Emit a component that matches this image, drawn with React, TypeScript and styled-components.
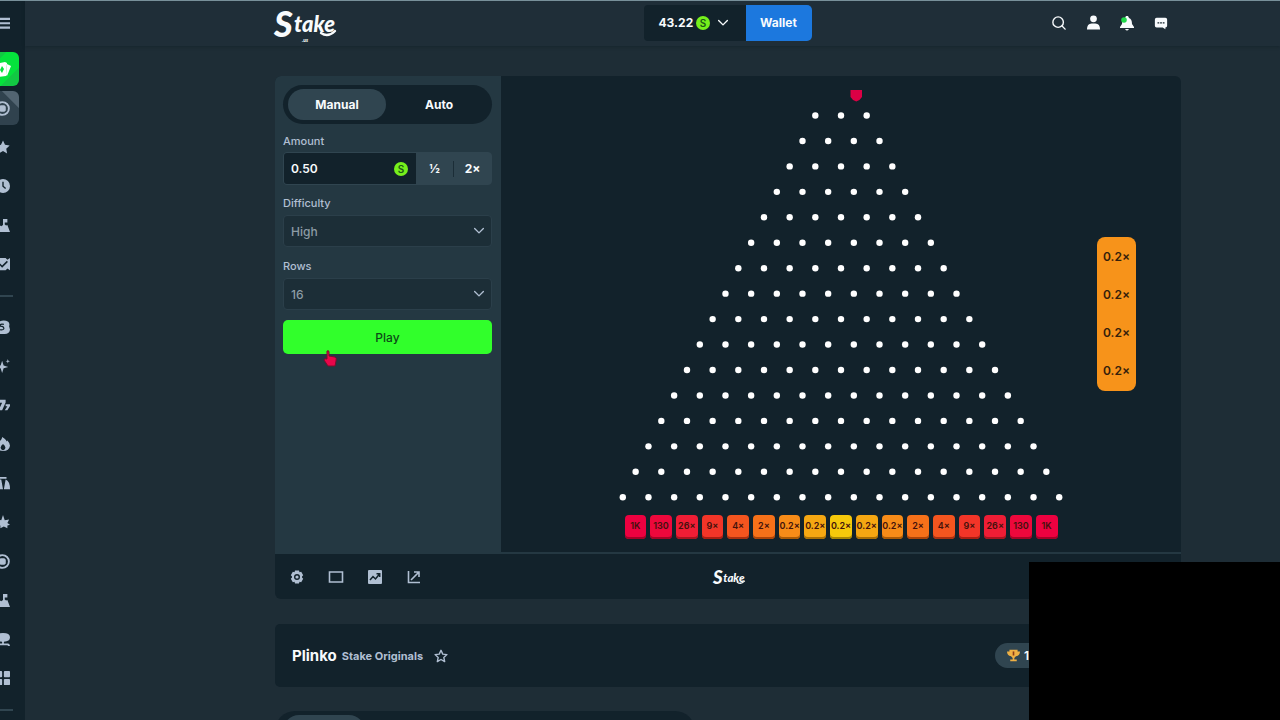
import React from "react";
import styled, { createGlobalStyle, css } from "styled-components";

const c = {
  page: "#1e2d36",
  dark: "#12222b",
  panel: "#243842",
  raised: "#304550",
  field: "#1c2e37",
  line: "#2b3f4a",
  muted: "#b0bfd2",
  white: "#f8fbfd",
};

const GlobalStyle = createGlobalStyle`
  *, *::before, *::after { box-sizing: border-box; }
  body { margin: 0; background: ${c.page}; color: ${c.white}; font-family: Inter, "Open Sans", sans-serif; font-size: 12px; }
  button, input, select { font: inherit; color: inherit; margin: 0; }
  button { border: 0; background: none; padding: 0; cursor: pointer; }
`;

const Shell = styled.div`
  display: grid;
  grid-template-columns: 25px minmax(0, 1fr);
  height: 100vh;
  overflow: hidden;
  border-top: 1px solid #78909a;
`;

const SideNav = styled.nav`
  background: ${c.dark};
  overflow: hidden;
  color: ${c.muted};
`;

const NavList = styled.div`
  display: flex;
  flex-direction: column;
  gap: 5px;
  width: 33px;
  margin-left: -14px;
`;

const NavButton = styled.button<{ $tone?: "green" | "grey" }>`
  display: flex;
  align-items: center;
  justify-content: center;
  flex: none;
  width: 33px;
  height: 34px;
  border-radius: 6px;
  overflow: hidden;
  ${(p) => p.$tone === "green" && css`background: linear-gradient(135deg, #12c843 30%, #05e23c 31%, #05e23c 72%, #12c843 73%); color: #fff;`}
  ${(p) => p.$tone === "grey" && css`background: linear-gradient(45deg, #30424e 74%, #526471 75%);`}
`;

const MenuButton = styled(NavButton)`
  height: 44px;
  margin-bottom: 2px;
`;

const NavRule = styled.hr`
  width: 27px;
  height: 2px;
  margin: 9px 0 8px;
  border: 0;
  flex: none;
  background: ${c.raised};
`;

const Column = styled.div`
  min-width: 0;
`;

const Header = styled.header`
  display: grid;
  grid-template-columns: 1fr auto 1fr;
  align-items: center;
  height: 45px;
  padding: 0 99px 2px 249px;
  background: #1f2e38;
  box-shadow: 0 1px 3px rgba(10, 24, 32, 0.35);
`;

const Brand = styled.a`
  justify-self: start;
  display: block;
  color: ${c.white};
  text-decoration: none;
`;

const Balance = styled.div`
  display: flex;
  height: 36px;
`;

const BalanceButton = styled.button`
  display: flex;
  align-items: center;
  gap: 3px;
  width: 102px;
  padding: 0 18px 0 15px;
  border-radius: 4px 0 0 4px;
  background: ${c.dark};
  font-weight: 700;
  & > :last-child { margin-left: auto; }
`;

const WalletButton = styled.button`
  width: 66px;
  border-radius: 0 5px 5px 0;
  background: #1c78de;
  font-weight: 700;
`;

const HeaderIcons = styled.div`
  justify-self: end;
  display: flex;
  align-items: center;
  gap: 18px;
  padding-right: 12px;
`;

const IconButton = styled.button`
  display: flex;
  justify-content: center;
  min-width: 16px;
`;

const Content = styled.main`
  padding: 30px 99px 0 250px;
`;

const GameCard = styled.section`
  display: grid;
  grid-template-columns: 226px minmax(0, 1fr);
  border-radius: 6px;
  overflow: hidden;
  background: ${c.dark};
`;

const Controls = styled.form`
  display: flex;
  flex-direction: column;
  padding: 9px 9px 0 8px;
  background: ${c.panel};
`;

const ModeTabs = styled.div`
  display: grid;
  grid-template-columns: 98px 1fr;
  gap: 3px;
  height: 39px;
  padding: 4px 3px 4px 5px;
  margin-bottom: 9px;
  border-radius: 20px;
  background: ${c.dark};
`;

const ModeTab = styled.button<{ $active?: boolean }>`
  border-radius: 16px;
  font-weight: 700;
  background: ${(p) => (p.$active ? c.raised : "transparent")};
`;

const Label = styled.label`
  height: 19px;
  line-height: 16px;
  font-size: 11px;
  font-weight: 500;
  color: ${c.muted};
`;

const AmountRow = styled.div`
  display: flex;
  height: 33px;
  margin-bottom: 10px;
  border: 1px solid ${c.raised};
  border-radius: 4px;
  overflow: hidden;
  background: ${c.raised};
`;

const AmountField = styled.div`
  display: flex;
  align-items: center;
  flex: 1;
  min-width: 0;
  padding: 0 8px 0 7px;
  background: ${c.dark};
`;

const AmountInput = styled.input`
  flex: 1;
  min-width: 0;
  padding: 0;
  border: 0;
  outline: 0;
  background: transparent;
  font-weight: 600;
`;

const Multiply = styled.button`
  width: 37px;
  font-weight: 700;
`;

const Divider = styled.span`
  width: 1px;
  height: 16px;
  align-self: center;
  background: #1b2d37;
`;

const SelectWrap = styled.div`
  display: grid;
  align-items: center;
  height: 32px;
  margin: 1px 0 11px;
  color: #8d9ca5;
  & > * { grid-area: 1 / 1; }
  & > svg { justify-self: end; margin-right: 8px; pointer-events: none; color: ${c.muted}; }
`;

const Select = styled.select`
  appearance: none;
  width: 100%;
  height: 32px;
  padding: 0 7px;
  border: 1px solid ${c.line};
  border-radius: 4px;
  background: ${c.field};
  font-weight: 500;
`;

const PlayButton = styled.button`
  height: 34px;
  margin-top: -1px;
  border-radius: 5px;
  background: #31ff2b;
  color: #0c4a17;
  font-weight: 500;
`;

const Board = styled.div`
  position: relative;
  display: flex;
  flex-direction: column;
  align-items: center;
  height: 478px;
  border-bottom: 2px solid ${c.panel};
`;

const Buckets = styled.div`
  display: grid;
  grid-template-columns: repeat(17, minmax(0, 1fr));
  gap: 4px;
  width: 433px;
  margin-top: 4px;
`;

const Bucket = styled.div<{ $color: string; $edge: string }>`
  height: 24px;
  line-height: 22px;
  border-radius: 4px;
  background: ${(p) => p.$color};
  box-shadow: inset 0 -2px 0 ${(p) => p.$edge};
  color: #43120c;
  font-size: 9px;
  font-weight: 600;
  text-align: center;
  white-space: nowrap;
`;

const Results = styled.div`
  position: absolute;
  top: 161px;
  right: 45px;
  display: grid;
  grid-template-rows: repeat(4, 1fr);
  align-items: center;
  width: 39px;
  height: 154px;
  padding-bottom: 2px;
  border-radius: 8px;
  background: #f7931a;
  color: #35200b;
  font-weight: 600;
  text-align: center;
`;

const GameFooter = styled.div`
  grid-column: 1 / -1;
  display: grid;
  grid-template-columns: 1fr auto 1fr;
  align-items: center;
  height: 45px;
  padding: 0 13px 0 14px;
  color: ${c.muted};
`;

const FooterIcons = styled.div`
  display: flex;
  gap: 23px;
`;

const FairnessButton = styled.button`
  justify-self: end;
  width: 86px;
  height: 30px;
  border-top: 1px solid ${c.raised};
  border-radius: 4px;
`;

const TitleCard = styled.section`
  display: flex;
  align-items: center;
  height: 63px;
  margin-top: 25px;
  padding: 0 17px;
  border-radius: 5px;
  background: ${c.dark};
`;

const Title = styled.h1`
  margin: 0 5px 0 0;
  font-size: 15px;
  font-weight: 700;
`;

const Provider = styled.a`
  margin-right: 10px;
  color: ${c.muted};
  font-size: 11px;
  font-weight: 700;
  text-decoration: none;
`;

const RankBadge = styled.div`
  display: flex;
  align-items: center;
  gap: 4px;
  width: 169px;
  height: 25px;
  margin-left: auto;
  padding-left: 12px;
  border-radius: 13px;
  background: ${c.raised};
  font-weight: 600;
`;

const InfoTabs = styled.div`
  width: 420px;
  height: 40px;
  margin-top: 24px;
  padding: 4px 8px;
  border-radius: 20px;
  background: ${c.dark};
`;

const InfoTab = styled.button`
  width: 82px;
  height: 32px;
  border-radius: 16px;
  background: ${c.raised};
`;

const Cover = styled.div`
  position: fixed;
  right: 0;
  bottom: 0;
  width: 251px;
  height: 158px;
  background: #000;
`;

const Pointer = styled.svg`
  position: absolute;
  left: 323px;
  top: 350px;
`;

const Icon = ({ size = 14, children, box = 16 }: { size?: number; box?: number; children: React.ReactNode }) => (
  <svg width={size} height={size} viewBox={`0 0 ${box} ${box}`} fill="currentColor" aria-hidden="true">
    {children}
  </svg>
);

const line = { fill: "none", stroke: "currentColor", strokeWidth: 1.6, strokeLinecap: "round", strokeLinejoin: "round" } as const;

const LogoSvg = styled.svg`
  display: block;
  overflow: visible;
  font-family: Lato, sans-serif;
  font-style: italic;
  font-weight: 900;
`;

const Logo = ({ width, height, suffix }: { width: number; height: number; suffix?: boolean }) => (
  <LogoSvg width={width} height={height} viewBox="0 0 62 34" fill="currentColor" role="img" aria-label="Stake">
    <text x="0" y="31" fontSize="36">S</text>
    <text x="20" y="26" fontSize="22">take</text>
    <path d="M47 27q7 5 14-2" fill="none" stroke="currentColor" strokeWidth="2.4" strokeLinecap="round" />
    {suffix && <text x="28" y="36" fontSize="5">.us</text>}
  </LogoSvg>
);

const Coin = () => (
  <svg width="14" height="14" viewBox="0 0 14 14" aria-hidden="true">
    <circle cx="7" cy="7" r="7" fill="#76f01c" />
    <text x="7" y="10.500" textAnchor="middle" fontFamily="Inter, sans-serif" fontWeight="600" fontSize="10" fill="#1b5a16">S</text>
  </svg>
);

const Chevron = () => (
  <Icon size={10}><path d="m1 4 7 7 7-7" {...line} strokeWidth={2.2} /></Icon>
);

const Flag = () => (
  <Icon><path d="M8 1h5v4h-3v2.500l1.500 1 1.500-.5 3 8H0l4-8 2 1.500L8 8z" /></Icon>
);
const Chip = () => (
  <Icon size={15}><circle cx="8" cy="8" r="6.800" {...line} strokeWidth={2} /><path d="M6 4.500h4L11.500 6v4L10 11.500H6L4.500 10V6z" /></Icon>
);

const firstGroup: [string, React.ReactNode][] = [
  ["Favourites", <Icon><path d="m8 .6 2.300 4.900 5.300.7-3.900 3.700 1 5.400L8 12.700l-4.700 2.600 1-5.400L.4 6.200l5.300-.7z" /></Icon>],
  ["Recent", <Icon><circle cx="8" cy="8" r="8" /><path d="M8 3v5.300l3 2.500" fill="none" stroke={c.dark} strokeWidth="1.600" /></Icon>],
  ["Challenges", <Flag />],
  ["My Bets", <Icon><path d="M0 1h11l2 2 3-2v14l-3-2-2 2H0z" /><path d="m4 8 3 3 6-6" fill="none" stroke={c.dark} strokeWidth="1.800" /></Icon>],
];

const secondGroup: [string, React.ReactNode][] = [
  ["Originals", <Icon><path d="M3 2q6-3 11 0 2 2 1 5l1 4q-1 5-6 5H3z" /><path d="M9 5q-5-1-4 2 4 0 4 3-1 2-5 1" fill="none" stroke={c.dark} strokeWidth="1.300" /></Icon>],
  ["New Releases", <Icon><path d="m7 2 1.700 5.300L14 9l-5.300 1.700L7 16l-1.700-5.300L0 9l5.300-1.700zM13.500 0l.6 1.900 1.900.6-1.900.6-.6 1.900-.6-1.900-1.900-.6 1.900-.6z" /></Icon>],
  ["Slots", <Icon><path d="M0 2h11v3L7 14H3l4-8.500H0zM11 7h5v2l-3 5h-3l3-4.500h-2z" /></Icon>],
  ["Hot", <Icon><path d="M7 0q5 3 5 5l1-1q3 3 3 6-1 6-8 6T0 10q0-4 3-6l1 1Q7 3 7 0z" /><path d="M8 8q4 3 2 6-2 2-4 0-2-3 2-6z" fill={c.dark} /></Icon>],
  ["Table Games", <Icon><path d="M0 1h12v2H0zM1 4h5l2 11H1zM11 4q5 2 5 11H9z" /></Icon>],
  ["Burst", <Icon><path d="m8 0 2 6 5-1-2 4 3 2-3 1v3l-4-2-4 2v-3l-4-1 2-2-2-4 5 1z" /></Icon>],
  ["Live Casino", <Chip />],
  ["Tournaments", <Flag />],
  ["Game Shows", <Icon><path d="M0 6q0-5 8-5t8 5-7 5v2h5q2 1 2 3h-2l-1-1H3l-1 1H0q0-2 2-3h5v-2Q0 11 0 6z" /></Icon>],
  ["All Games", <Icon><rect y="0" width="7" height="7" rx="1" /><rect x="9" width="7" height="7" rx="1" /><rect y="9" width="7" height="7" rx="1" /><rect x="9" y="9" width="7" height="7" rx="1" /></Icon>],
];

const buckets: [string, string, string][] = [
  ["1K", "#ed0140", "#a60028"],
  ["130", "#ee083c", "#a60426"],
  ["26×", "#ef1d35", "#a91420"],
  ["9×", "#f23528", "#aa1e12"],
  ["4×", "#f4551f", "#aa3010"],
  ["2×", "#f67119", "#ad4408"],
  ["0.2×", "#f78c18", "#ac5b05"],
  ["0.2×", "#f5a712", "#a96f05"],
];
const bucketRow = [...buckets, ["0.2×", "#f6c90b", "#a98704"] as [string, string, string], ...[...buckets].reverse()];

const pegs = Array.from({ length: 16 }, (_, row) =>
  Array.from({ length: row + 3 }, (_, i) => ({ x: 224 + (i - (row + 2) / 2) * 25.67, y: 39.5 + row * 25.45 })),
).flat();

export default function App() {
  return (
    <>
      <GlobalStyle />
      <Shell>
        <SideNav aria-label="Casino">
          <NavList>
            <MenuButton aria-label="Menu"><Icon size={14}><path d="M0 2h16v2.500H0zM0 7h16v2.500H0zM0 12h16v2.500H0z" /></Icon></MenuButton>
            <NavButton $tone="green" aria-label="Casino"><Icon size={16}><path d="m0 3 10-2 2 1-1 13-8 1z" /><path d="m12 3 4 2-4 10-1-1z" /><path d="m7 5 2 3-2 4-2-3z" fill="#05e23c" /></Icon></NavButton>
            <NavButton $tone="grey" aria-label="Promotions"><Chip /></NavButton>
            {firstGroup.map(([name, icon]) => <NavButton key={name} aria-label={name}>{icon}</NavButton>)}
            <NavRule />
            {secondGroup.map(([name, icon]) => <NavButton key={name} aria-label={name}>{icon}</NavButton>)}
            <NavRule />
          </NavList>
        </SideNav>
        <Column>
          <Header>
            <Brand href="#"><Logo width={62} height={34} suffix /></Brand>
            <Balance>
              <BalanceButton>43.22 <Coin /><Chevron /></BalanceButton>
              <WalletButton>Wallet</WalletButton>
            </Balance>
            <HeaderIcons>
              <IconButton aria-label="Search"><Icon size={14}><circle cx="7" cy="7" r="6" {...line} /><path d="m11.500 11.500 3.500 3.500" {...line} /></Icon></IconButton>
              <IconButton aria-label="Account"><Icon size={15}><circle cx="8" cy="4" r="3.600" /><path d="M1 15.500q0-6.500 5-6.500h4q5 0 5 6.500z" /></Icon></IconButton>
              <IconButton aria-label="Notifications"><Icon size={16}><path d="M7 1h2l1 2q3 1 3 6l2 3v1H1v-1l2-3q0-5 3-6zM6 14h4q-2 3-4 0z" /><circle cx="5" cy="5" r="2.800" fill="#20d84a" /></Icon></IconButton>
              <IconButton aria-label="Chat"><Icon size={14}><path d="M3 2h10q2 0 2 2v7q0 2-2 2v2l-3-2H3q-2 0-2-2V4q0-2 2-2z" /><path d="M4 7h2v1.500H4zM7 7h2v1.500H7zM10 7h2v1.500h-2z" fill={c.dark} /></Icon></IconButton>
            </HeaderIcons>
          </Header>
          <Content>
            <GameCard>
              <Controls onSubmit={(e) => e.preventDefault()}>
                <ModeTabs>
                  <ModeTab type="button" $active>Manual</ModeTab>
                  <ModeTab type="button">Auto</ModeTab>
                </ModeTabs>
                <Label htmlFor="amount">Amount</Label>
                <AmountRow>
                  <AmountField><AmountInput id="amount" defaultValue="0.50" /><Coin /></AmountField>
                  <Multiply type="button">½</Multiply>
                  <Divider />
                  <Multiply type="button">2×</Multiply>
                </AmountRow>
                <Label htmlFor="difficulty">Difficulty</Label>
                <SelectWrap>
                  <Select id="difficulty"><option>High</option></Select>
                  <Chevron />
                </SelectWrap>
                <Label htmlFor="rows">Rows</Label>
                <SelectWrap>
                  <Select id="rows"><option>16</option></Select>
                  <Chevron />
                </SelectWrap>
                <PlayButton>Play</PlayButton>
              </Controls>
              <Board>
                <svg width="448" height="435" viewBox="0 0 448 435" role="img" aria-label="Plinko board">
                  <path d="M233.500 14h11.500v7q-2 3.500-5.750 4.500-3.750-1-5.750-4.500z" fill="#dc0045" />
                  {pegs.map((p, i) => <circle key={i} cx={p.x} cy={p.y} r="3.200" fill="#fff" />)}
                </svg>
                <Buckets>
                  {bucketRow.map(([text, color, edge], i) => <Bucket key={i} $color={color} $edge={edge}>{text}</Bucket>)}
                </Buckets>
                <Results>
                  <span>0.2×</span><span>0.2×</span><span>0.2×</span><span>0.2×</span>
                </Results>
              </Board>
              <GameFooter>
                <FooterIcons>
                  <IconButton aria-label="Settings"><Icon size={16}><path fillRule="evenodd" d="M6 1.500h4l.5 1.700 1.700-.4 2 3.400L13 7.400v1.200l1.200 1.200-2 3.400-1.700-.4-.5 1.700H6l-.5-1.700-1.700.4-2-3.400L3 8.600V7.400L1.800 6.200l2-3.400 1.700.4zM8 5a3 3 0 1 0 0 6 3 3 0 0 0 0-6z" /><circle cx="8" cy="8" r="1.600" /></Icon></IconButton>
                  <IconButton aria-label="Theatre mode"><Icon size={16}><path d="M1.500 3h13v10h-13z" fill="none" stroke="currentColor" strokeWidth="1.600" /></Icon></IconButton>
                  <IconButton aria-label="Live stats"><Icon size={16}><rect x="1" y="1" width="14" height="14" rx="1" /><path d="m3 11 3-3.500L8.500 10l4-5M9.500 4.700h3.200V8" fill="none" stroke={c.dark} strokeWidth="1.500" /></Icon></IconButton>
                  <IconButton aria-label="Pop out"><Icon size={16}><path d="M2.500 2v11.500H14M5 11l7.500-7.500M8 3h5v5" fill="none" stroke="currentColor" strokeWidth="1.600" /></Icon></IconButton>
                </FooterIcons>
                <Brand href="#"><Logo width={32} height={18} /></Brand>
                <FairnessButton aria-label="Fairness" />
              </GameFooter>
            </GameCard>
            <TitleCard>
              <Title>Plinko</Title>
              <Provider href="#">Stake Originals</Provider>
              <IconButton aria-label="Add to favourites"><Icon><path d="m8 1.500 2 4.400 4.800.5-3.600 3.200 1 4.800L8 12l-4.200 2.400 1-4.800L1.200 6.400 6 5.900z" {...line} stroke={c.muted} /></Icon></IconButton>
              <RankBadge>
                <Icon size={13}><path d="M3 1h10v2h3q0 5-5 6l-2 2v2h3v2H4v-2h3v-2L5 9Q0 8 0 3h3z" fill="#eeb044" /><path d="M7 3h2v5H7z" fill="#8a3a18" /></Icon>
                1
              </RankBadge>
            </TitleCard>
            <InfoTabs><InfoTab aria-label="Challenges" /></InfoTabs>
          </Content>
        </Column>
      </Shell>
      <Cover />
      <Pointer width="14" height="17" viewBox="0 0 14 17" aria-hidden="true">
        <path d="M4 1q2-1 2 1v4l6 1q2 1 1 4l-1 5H5L1 10q0-2 3-1z" fill="#e9064a" stroke="#7c0c2c" />
      </Pointer>
    </>
  );
}
